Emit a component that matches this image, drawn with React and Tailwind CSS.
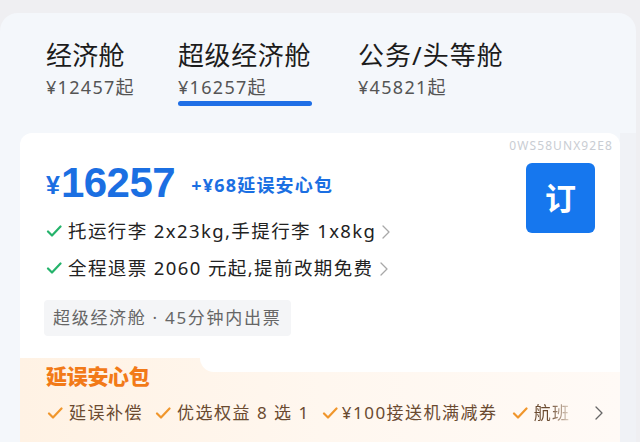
import React from "react";

const font = { fontFamily: '"Noto Sans", "Noto Sans CJK SC", sans-serif' };

function Check({ color, size = 16 }) {
  return (
    <svg width={size} height={size} viewBox="0 0 16 16" className="shrink-0">
      <path d="M2 8.5 L6 12.5 L14.5 3.5" fill="none" stroke={color} strokeWidth="2.2" strokeLinecap="round" strokeLinejoin="round" />
    </svg>
  );
}

function Chevron({ color = "#a8a8a8", w = 8, h = 14 }) {
  return (
    <svg width={w} height={h} viewBox="0 0 8 14" className="shrink-0">
      <path d="M1 1 L7 7 L1 13" fill="none" stroke={color} strokeWidth="1.3" strokeLinecap="round" strokeLinejoin="round" />
    </svg>
  );
}

export default function App() {
  return (
    <div className="w-[640px] h-[442px] overflow-hidden bg-[#efeff2] pt-[13px]" style={font}>
      <div className="mr-[4px] h-full rounded-t-[18px] bg-[#f4f7fb] flex flex-col">
        <div className="flex pl-[46px] pt-[26px]">
          <div className="w-[132px] flex flex-col">
            <div className="text-[26px] leading-[32px] text-[#1c1c1c] tracking-[0.3px]">经济舱</div>
            <div className="text-[18px] leading-[22px] text-[#555] mt-[5px] tracking-[1.3px]">¥12457起</div>
          </div>
          <div className="w-[180px] flex flex-col">
            <div className="text-[26px] leading-[32px] text-[#1c1c1c] tracking-[0.6px]">超级经济舱</div>
            <div className="text-[18px] leading-[22px] text-[#555] mt-[5px] tracking-[1.3px]">¥16257起</div>
            <div className="w-[134px] h-[5px] rounded-full mt-[3px] bg-[#1f6fe6]" />
          </div>
          <div className="flex flex-col">
            <div className="text-[26px] leading-[32px] text-[#1c1c1c] tracking-[1px]">公务/头等舱</div>
            <div className="text-[18px] leading-[22px] text-[#555] mt-[5px] tracking-[1.3px]">¥45821起</div>
          </div>
        </div>
        <div className="flex-1 flex mt-[27px]">
          <div className="ml-[20px] w-[600px] bg-white rounded-t-[12px] flex flex-col">
            <div className="flex justify-end pr-[7px] pt-[6px] h-[26px] text-[12px] leading-[14px] text-[#c9cdd3] tracking-[1.1px]">0WS58UNX92E8</div>
            <div className="flex pl-[26px] pr-[25px]">
              <div className="flex-1 flex flex-col">
                <div className="flex items-end h-[46px]">
                  <span className="text-[25px] leading-[30px] font-bold text-[#1b6fe2] mb-[5px] mr-[1px]" style={{ fontFamily: '"Liberation Sans", Arial, sans-serif' }}>¥</span>
                  <span className="text-[42px] leading-[44px] font-bold text-[#1b6fe2] tracking-[-0.5px]" style={{ fontFamily: '"Liberation Sans", Arial, sans-serif' }}>16257</span>
                  <span className="ml-[16px] mb-[10px] text-[18px] leading-[20px] font-bold text-[#1b6fe2] tracking-[1.2px]">+¥68延误安心包</span>
                </div>
                <div className="flex items-center mt-[13px] h-[26px] text-[18.5px] text-[#222] tracking-[1.4px]">
                  <Check color="#25b36b" />
                  <span className="ml-[6px]">托运行李 2x23kg,手提行李 1x8kg</span>
                  <span className="ml-[6px] mt-[1px]"><Chevron /></span>
                </div>
                <div className="flex items-center mt-[11px] h-[26px] text-[18.5px] text-[#222] tracking-[1.4px]">
                  <Check color="#25b36b" />
                  <span className="ml-[6px]">全程退票 2060 元起,提前改期免费</span>
                  <span className="ml-[6px] mt-[1px]"><Chevron /></span>
                </div>
                <div className="mt-[19px] self-start h-[36px] flex items-center pl-[9px] pr-[10px] bg-[#f4f5f7] rounded-[4px] text-[17px] text-[#666] -ml-[2px] tracking-[1.7px]">
                  超级经济舱 · 45分钟内出票
                </div>
              </div>
              <div className="pt-[4px]">
                <div className="w-[69px] h-[70px] rounded-[6px] bg-[#1677ee] flex items-center justify-center text-white text-[31px] leading-none font-semibold">订</div>
              </div>
            </div>
            <div className="relative mt-[22px] flex-1 bg-gradient-to-r from-[#fff2e4] via-[#fff7ef] to-[#fffaf6]">
              <div className="absolute right-0 top-0 w-[420px] h-[14px] bg-white rounded-bl-[14px]" />
              <div className="relative pl-[26px] pt-[5px] text-[21px] leading-[26px] font-black text-[#f27a18] tracking-[-0.3px]">延误安心包</div>
              <div className="flex items-center pl-[27px] pr-[16px] mt-[11px] text-[17px] text-[#6a4a30] tracking-[1.5px]">
                <Check color="#f0962c" />
                <span className="ml-[6px]">延误补偿</span>
                <span className="ml-[12px]"><Check color="#f0962c" /></span>
                <span className="ml-[6px]">优选权益 8 选 1</span>
                <span className="ml-[12px]"><Check color="#f0962c" /></span>
                <span className="ml-[4px]">¥100接送机满减券</span>
                <span className="ml-[14px]"><Check color="#f0962c" /></span>
                <span className="ml-[6px] bg-gradient-to-r from-[#6a4a30] from-40% to-[#eadfd4] bg-clip-text text-transparent">航班</span>
                <span className="ml-auto mr-[1px]"><Chevron color="#666" /></span>
              </div>
            </div>
          </div>
          <div className="flex-1 bg-[#f0f2f6]" />
        </div>
      </div>
    </div>
  );
}
